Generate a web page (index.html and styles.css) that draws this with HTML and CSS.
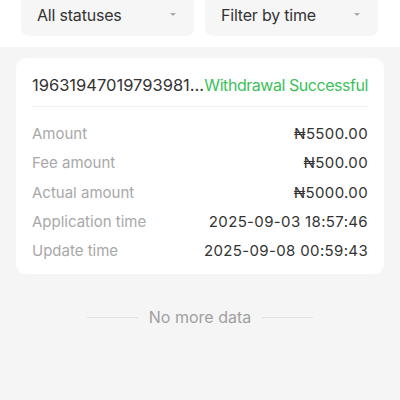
FILE: index.html
```html
<!DOCTYPE html>
<html lang="en">
<head>
  <meta charset="UTF-8">
  <meta name="viewport" content="width=device-width, initial-scale=1.0">
  <title>Withdrawal records</title>
  <link rel="stylesheet" href="styles.css">
</head>
<body>
  <div class="filters">
    <div class="select">
      <span>All statuses</span>
      <i class="caret"></i>
    </div>
    <div class="select">
      <span>Filter by time</span>
      <i class="caret"></i>
    </div>
  </div>

  <div class="list">
    <div class="card">
      <div class="card-head">
        <span class="order-no">19631947019793981...</span>
        <span class="status">Withdrawal Successful</span>
      </div>
      <div class="row"><span class="label">Amount</span><span class="value">₦5500.00</span></div>
      <div class="row"><span class="label">Fee amount</span><span class="value">₦500.00</span></div>
      <div class="row"><span class="label">Actual amount</span><span class="value">₦5000.00</span></div>
      <div class="row"><span class="label">Application time</span><span class="value">2025-09-03 18:57:46</span></div>
      <div class="row"><span class="label">Update time</span><span class="value">2025-09-08 00:59:43</span></div>
    </div>

    <div class="no-more">
      <span class="line"></span>
      <span>No more data</span>
      <span class="line"></span>
    </div>
  </div>
</body>
</html>
```

FILE: styles.css
```css
body {
  margin: 0;
  font-family: Inter, "Noto Sans", sans-serif;
  background-color: #f5f5f5;
  color: #333;
}
.filters {
  display: flex;
  gap: 11px;
  padding: 0 22px 11px 21px;
  background-color: #fff;
  margin-top: -14px;
}
.select {
  flex: 1;
  height: 50px;
  box-sizing: border-box;
  padding: 7px 16px 0 16px;
  background-color: #f6f6f6;
  border-radius: 8px;
  display: flex;
  justify-content: space-between;
  align-items: center;
  font-size: 16px;
  letter-spacing: -0.2px;
  color: #333;
}
.caret {
  width: 0;
  height: 0;
  border-left: 3px solid transparent;
  border-right: 3px solid transparent;
  border-top: 3px solid #aaa;
  margin-right: 2px;
}
.list {
  padding: 11px 16px;
}
.card {
  background-color: #fff;
  border-radius: 10px;
  padding: 0 16px 9px 16px;
}
.card-head {
  display: flex;
  justify-content: space-between;
  align-items: center;
  height: 42px;
  padding-top: 6px;
  border-bottom: 1px solid #f0f0f0;
  margin-bottom: 12px;
  font-size: 16.5px;
  white-space: nowrap;
}
.order-no {
  color: #333;
}
.status {
  color: #3cc15a;
  font-size: 16px;
  letter-spacing: -0.45px;
}
.row {
  display: flex;
  justify-content: space-between;
  align-items: center;
  height: 29.3px;
  font-size: 15px;
}
.label {
  color: #a8a8a8;
}
.value {
  color: #333;
  letter-spacing: 0.35px;
}
.no-more {
  display: flex;
  justify-content: center;
  align-items: center;
  gap: 11px;
  margin-top: 33px;
  font-size: 16px;
  color: #a0a0a0;
}
.no-more .line {
  width: 51px;
  height: 1px;
  background-color: #e2e2e2;
}
```
